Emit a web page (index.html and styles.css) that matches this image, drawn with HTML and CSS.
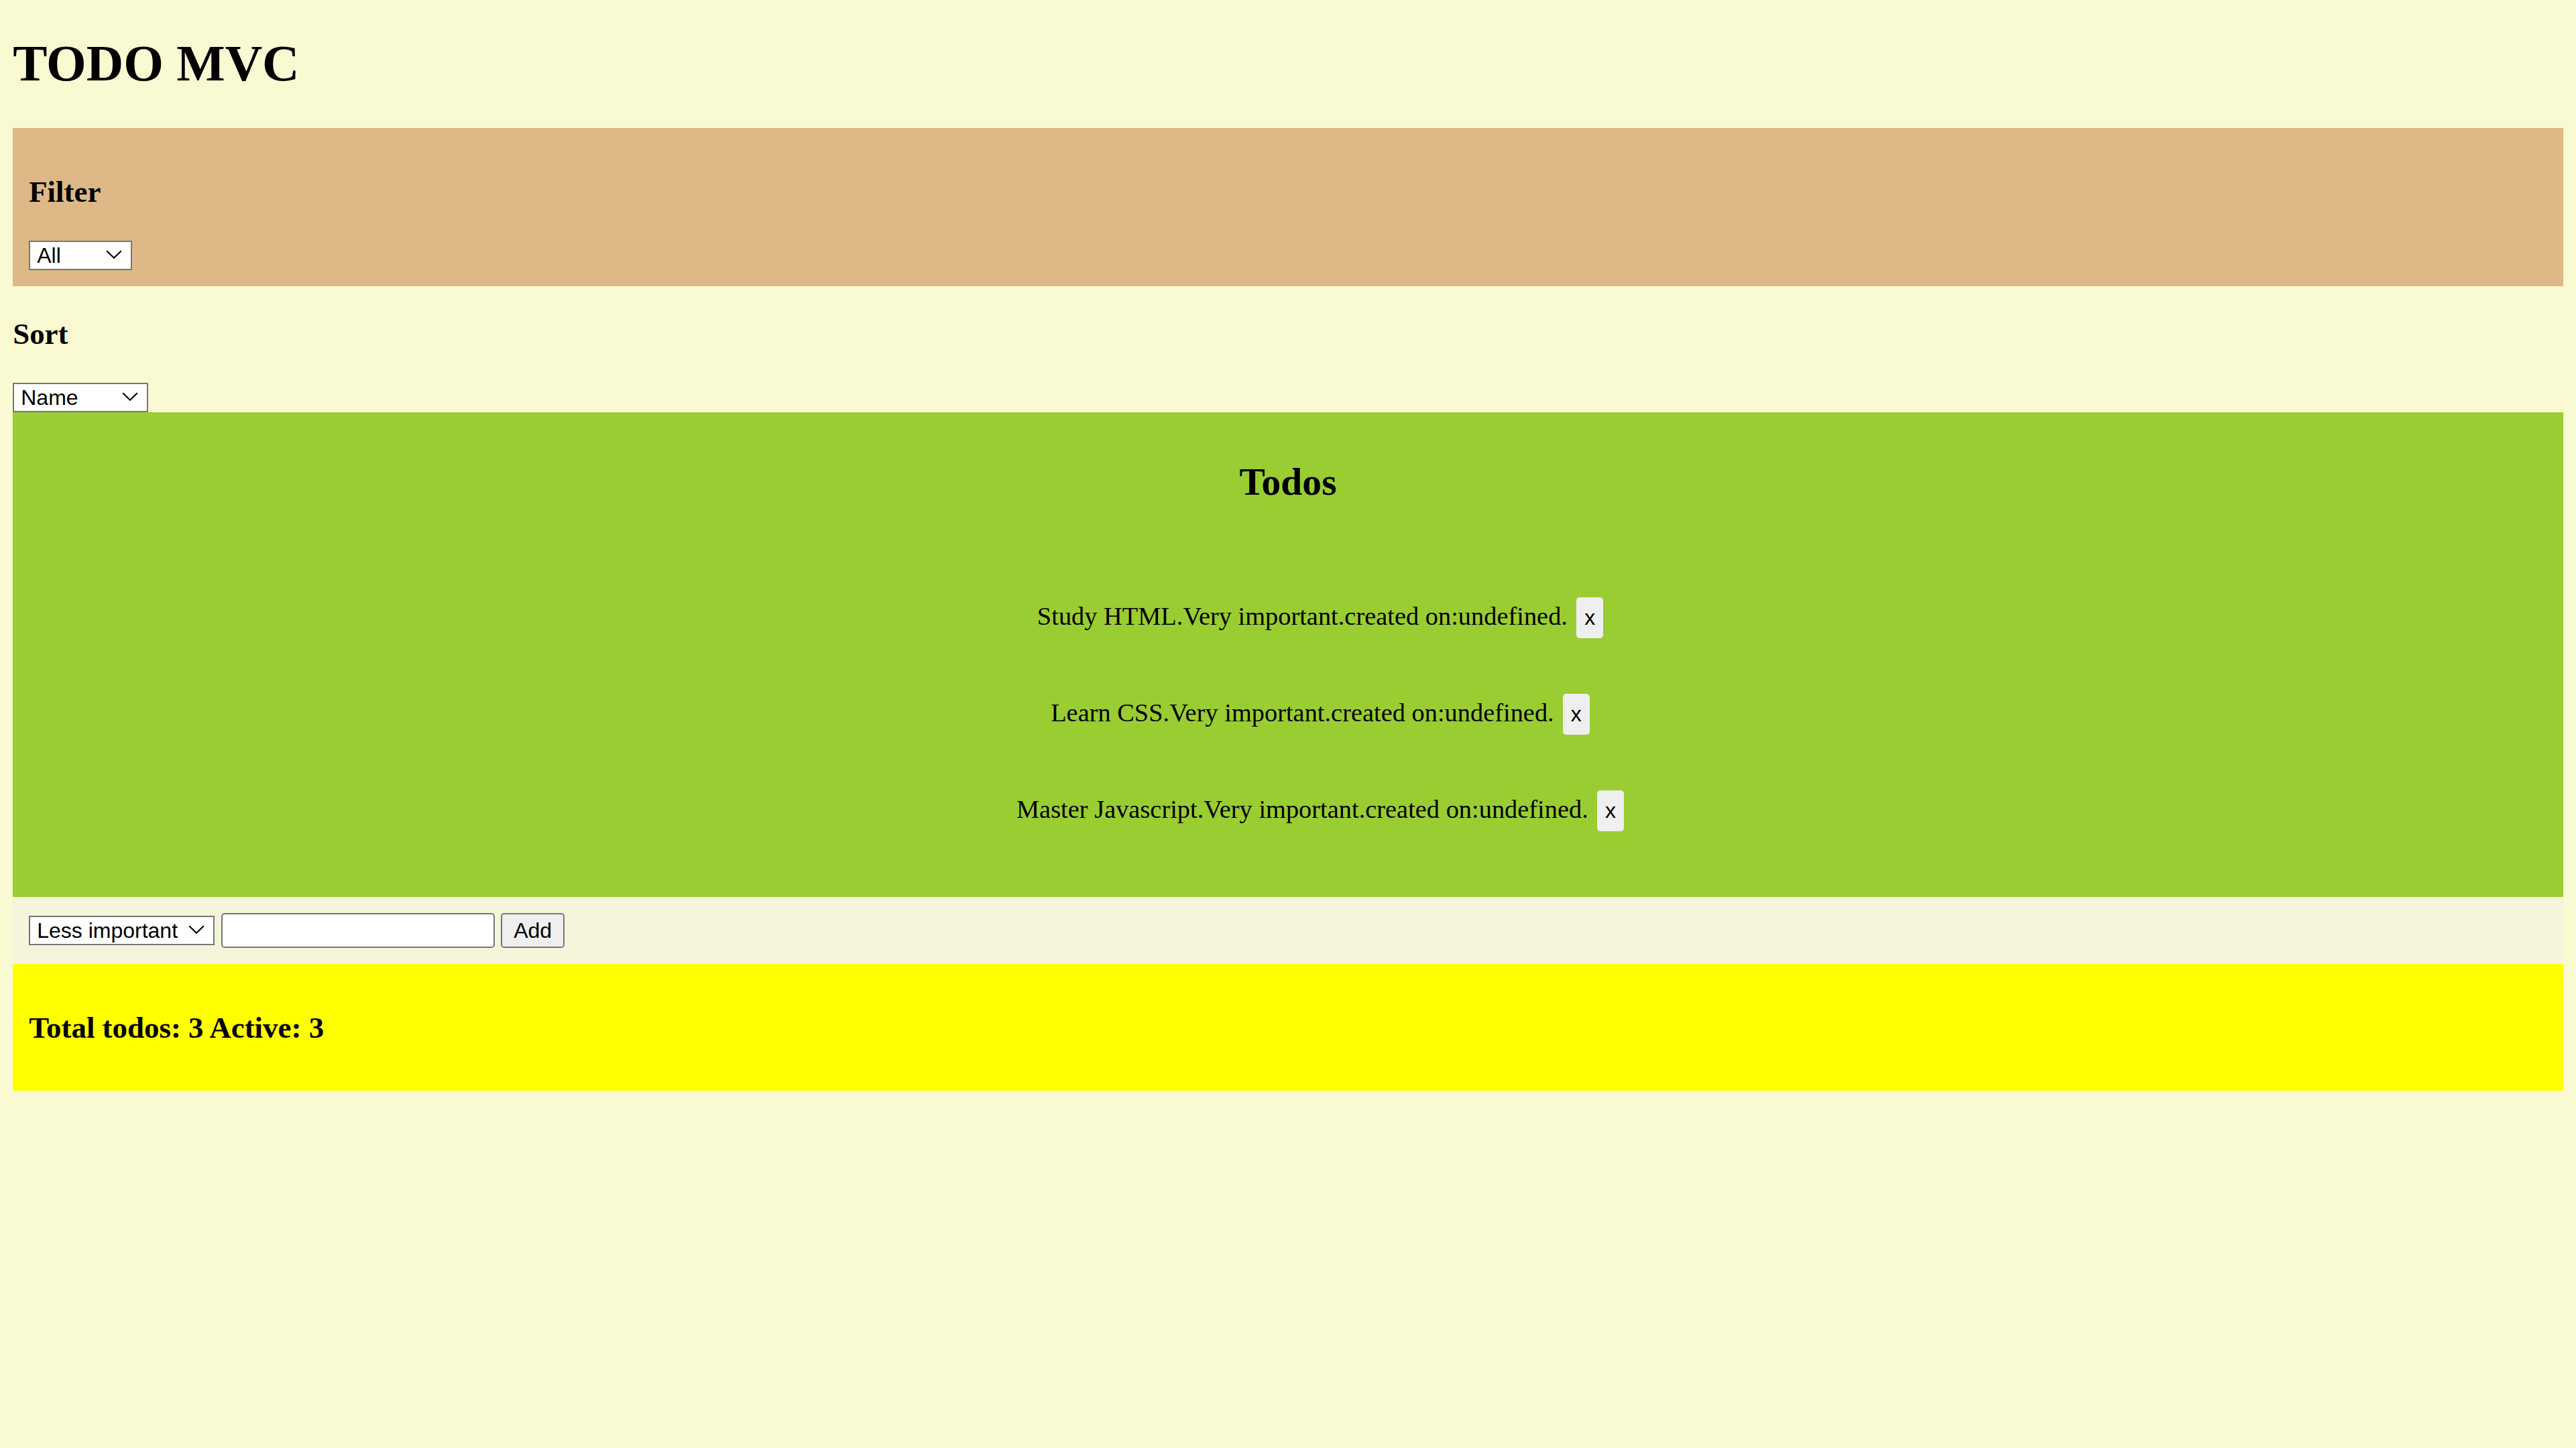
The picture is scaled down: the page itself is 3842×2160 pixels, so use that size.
FILE: index.html
```html
<!DOCTYPE html>
<html lang="en">
<head>
<meta charset="utf-8">
<title>TODO MVC</title>
<link rel="stylesheet" href="styles.css">
</head>
<body>
<h1 class="title">TODO MVC</h1>
<div class="filter-panel">
  <h3 class="panel-heading">Filter</h3>
  <span class="select-wrap"><select class="select select-filter"><option>All</option><option>Active</option><option>Completed</option></select><svg class="chevron" viewBox="0 0 10 5.4"><path d="M0.5 0.5 L5 4.9 L9.5 0.5"/></svg></span>
</div>
<div class="sort-panel">
  <h3 class="panel-heading">Sort</h3>
  <span class="select-wrap"><select class="select select-sort"><option>Name</option><option>Priority</option><option>Date</option></select><svg class="chevron" viewBox="0 0 10 5.4"><path d="M0.5 0.5 L5 4.9 L9.5 0.5"/></svg></span>
</div>
<div class="todos-panel">
  <h2 class="todos-heading">Todos</h2>
  <ul class="todo-list">
    <li class="todo-item"><span class="todo-text">Study HTML.Very important.created on:undefined.</span><button class="remove-btn">x</button></li>
    <li class="todo-item"><span class="todo-text">Learn CSS.Very important.created on:undefined.</span><button class="remove-btn">x</button></li>
    <li class="todo-item"><span class="todo-text">Master Javascript.Very important.created on:undefined.</span><button class="remove-btn">x</button></li>
  </ul>
</div>
<div class="add-panel">
  <span class="select-wrap"><select class="select select-priority"><option>Less important</option><option>Very important</option></select><svg class="chevron" viewBox="0 0 10 5.4"><path d="M0.5 0.5 L5 4.9 L9.5 0.5"/></svg></span>
  <input class="new-todo" type="text">
  <button class="add-btn">Add</button>
</div>
<div class="stats-panel">
  <h3 class="panel-heading">Total todos: 3 Active: 3</h3>
</div>
</body>
</html>
```

FILE: styles.css
```css
html {
  zoom: 2.4;
}

body {
  margin: 8px;
  background: #fafad2;
  color: #000;
  font-family: "Liberation Serif", "Times New Roman", serif;
  font-size: 16px;
}

.title {
  font-size: 32px;
  font-weight: bold;
  margin: 13.44px 0 21.44px;
}

.panel-heading {
  font-size: 18.72px;
  font-weight: bold;
  margin: 18.72px 0;
}

.filter-panel {
  background: #deb887;
  padding: 10px;
}

.sort-panel {
  padding: 0;
}

.select-wrap {
  position: relative;
  display: inline-block;
}

.select {
  -webkit-appearance: none;
  appearance: none;
  box-sizing: border-box;
  height: 18.33px;
  margin: 0;
  padding: 0 0 0 4.2px;
  border: 1px solid #767676;
  border-radius: 0;
  background: #fff;
  color: #000;
  font-family: "Liberation Sans", Arial, sans-serif;
  font-size: 13.33px;
}

.select-filter {
  width: 64.2px;
}

.select-sort {
  width: 84.2px;
}

.select-priority {
  width: 115.3px;
}

.chevron {
  position: absolute;
  right: 6.25px;
  top: 50%;
  width: 10px;
  height: 5.4px;
  margin-top: -2.7px;
  pointer-events: none;
  fill: none;
  stroke: #000;
  stroke-width: 0.9;
}

.todos-panel {
  background: #9acd32;
  padding: 10px;
  text-align: center;
}

.todos-heading {
  font-size: 24px;
  font-weight: bold;
  margin: 19.92px 0;
}

.todo-list {
  list-style: none;
  margin: 0;
  padding: 38.1px 0 31px 40px;
  display: flex;
  flex-direction: column;
  gap: 34.67px;
}

.todo-item {
  display: flex;
  justify-content: center;
  align-items: baseline;
  gap: 5.5px;
}

.remove-btn {
  margin: 0;
  padding: 5px;
  border: none;
  border-radius: 2px;
  background: #efefef;
  color: #000;
  font-family: "Liberation Sans", Arial, sans-serif;
  font-size: 13.33px;
}

.add-panel {
  background: #f5f5dc;
  padding: 10px;
}

.new-todo {
  box-sizing: border-box;
  width: 170.1px;
  height: 21.33px;
  margin: 0;
  padding: 1px 2px;
  border: 1px solid #767676;
  border-radius: 2px;
  background: #fff;
  font-family: "Liberation Sans", Arial, sans-serif;
  font-size: 13.33px;
}

.add-btn {
  box-sizing: border-box;
  height: 21.33px;
  margin: 0;
  padding: 1px 7px;
  border: 1px solid #767676;
  border-radius: 2px;
  background: #efefef;
  color: #000;
  font-family: "Liberation Sans", Arial, sans-serif;
  font-size: 13.33px;
}

.stats-panel {
  background: #ffff00;
  padding: 10px;
}
```
